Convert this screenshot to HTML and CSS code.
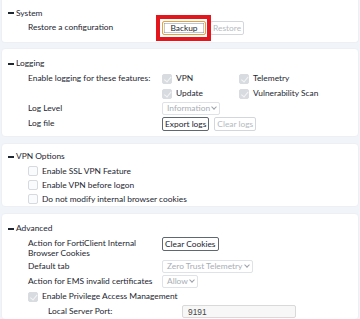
FILE: index.html
```html
<!DOCTYPE html>
<html lang="en">
<head>
    <meta charset="UTF-8">
    <meta name="viewport" content="width=device-width, initial-scale=1.0">
    <title>Settings</title>
    <link rel="stylesheet" href="styles.css">
</head>
<body>
    <div class="panel panel-system">
        <div class="section-title"><span class="collapse"></span>System</div>
        <div class="row">
            <div class="label">Restore a configuration</div>
            <div class="value">
                <span class="highlight"><button class="btn btn-focus">Backup</button></span>
                <button class="btn" disabled>Restore</button>
            </div>
        </div>
    </div>

    <div class="panel panel-logging">
        <div class="section-title"><span class="collapse"></span>Logging</div>
        <div class="row">
            <div class="label">Enable logging for these features:</div>
            <div class="value features">
                <label class="check"><span class="box checked"></span>VPN</label>
                <label class="check"><span class="box checked"></span>Telemetry</label>
            </div>
        </div>
        <div class="row">
            <div class="label"></div>
            <div class="value features">
                <label class="check"><span class="box checked"></span>Update</label>
                <label class="check"><span class="box checked"></span>Vulnerability Scan</label>
            </div>
        </div>
        <div class="row">
            <div class="label">Log Level</div>
            <div class="value"><span class="select select-info">Information<span class="chev"></span></span></div>
        </div>
        <div class="row">
            <div class="label">Log file</div>
            <div class="value">
                <button class="btn">Export logs</button>
                <button class="btn" disabled>Clear logs</button>
            </div>
        </div>
    </div>

    <div class="panel panel-vpn">
        <div class="section-title"><span class="collapse"></span>VPN Options</div>
        <div class="options">
            <label class="check"><span class="box"></span>Enable SSL VPN Feature</label>
            <label class="check"><span class="box"></span>Enable VPN before logon</label>
            <label class="check"><span class="box"></span>Do not modify internal browser cookies</label>
        </div>
    </div>

    <div class="panel panel-advanced">
        <div class="section-title"><span class="collapse"></span>Advanced</div>
        <div class="row row-wrap">
            <div class="label label-wrap">Action for FortiClient Internal Browser Cookies</div>
            <div class="value"><button class="btn">Clear Cookies</button></div>
        </div>
        <div class="row">
            <div class="label">Default tab</div>
            <div class="value"><span class="select select-tab">Zero Trust Telemetry<span class="chev"></span></span></div>
        </div>
        <div class="row">
            <div class="label nowrap">Action for EMS invalid certificates</div>
            <div class="value"><span class="select select-allow">Allow<span class="chev"></span></span></div>
        </div>
        <div class="options">
            <label class="check"><span class="box checked"></span>Enable Privilege Access Management</label>
        </div>
        <div class="port-row">
            <div class="port-label">Local Server Port:</div>
            <input class="port-input" type="text" value="9191" disabled>
        </div>
    </div>
</body>
</html>
```

FILE: styles.css
```css
* {
    box-sizing: border-box;
    margin: 0;
    padding: 0;
}

body {
    font-family: Lato, "Open Sans", sans-serif;
    font-size: 8.4px;
    line-height: 15px;
    color: #1d2631;
    background-color: #f1f4f8;
    padding: 0 1px;
}

.panel {
    background-color: white;
    border: 1px solid #eceff4;
    border-radius: 4px;
    margin-bottom: 6px;
}

.panel-system {
    border-top: none;
    border-radius: 0 0 4px 4px;
    height: 43px;
    padding-top: 6px;
    margin-bottom: 5px;
}

.panel-system .section-title {
    height: 14px;
}

.panel-logging {
    height: 89px;
    padding-top: 7px;
}

.panel-vpn {
    height: 64px;
    padding-top: 5px;
}

.panel-vpn .check {
    height: 14px;
}

.panel-advanced {
    padding-top: 7px;
}

.section-title {
    display: flex;
    align-items: center;
    padding-left: 6px;
    height: 15px;
}

.collapse {
    display: inline-block;
    width: 6px;
    height: 2px;
    background-color: #1d2631;
    margin-right: 2px;
}

.row {
    display: grid;
    grid-template-columns: 134px 1fr;
    padding-left: 26px;
    align-items: center;
    height: 15px;
}

.row-wrap {
    height: 23px;
    align-items: start;
    padding-top: 1px;
}

.label-wrap {
    line-height: 10px;
    padding-top: 1px;
}

.nowrap {
    white-space: nowrap;
}

.value {
    display: flex;
    align-items: center;
    gap: 5px;
}

.features {
    display: grid;
    grid-template-columns: 77px auto;
    gap: 0;
}

.btn {
    font-family: inherit;
    font-size: 8.4px;
    line-height: 12px;
    height: 14px;
    padding: 0 2px;
    background-color: white;
    color: #1d2631;
    border: 1px solid #5f6770;
    border-radius: 2px;
}

.btn:disabled {
    color: #b5bac0;
    border-color: #d3d7dc;
}

.highlight {
    position: relative;
    display: inline-flex;
    margin-right: -1px;
}

.highlight::after {
    content: "";
    position: absolute;
    top: -6px;
    bottom: -6px;
    left: -6px;
    right: -5px;
    border: 4px solid #e3161d;
}

.btn-focus {
    width: 44px;
    border-color: #e9a23b;
    box-shadow: inset 0 0 0 1px #fff, inset 0 0 0 1.5px #8a8f96;
}

.check {
    display: flex;
    align-items: center;
    height: 15px;
}

.box {
    position: relative;
    display: inline-block;
    flex-shrink: 0;
    width: 10px;
    height: 10px;
    border: 1px solid #d6d9dd;
    border-radius: 2px;
    margin-right: 4px;
    background-color: #fafbfc;
}

.box.checked {
    background-color: #d8dbdf;
    border-color: #d8dbdf;
}

.box.checked::after {
    content: "";
    position: absolute;
    left: 2.5px;
    top: 0;
    width: 2.5px;
    height: 5.5px;
    border-right: 1.5px solid #f4f5f6;
    border-bottom: 1.5px solid #f4f5f6;
    transform: rotate(40deg);
}

.select {
    display: inline-flex;
    align-items: center;
    justify-content: space-between;
    height: 13px;
    padding: 0 3px 0 4px;
    color: #a9aeb5;
    border: 1px solid #dfe2e6;
    border-radius: 2px;
}

.select-info {
    width: 58px;
}

.select-tab {
    width: 91px;
}

.select-allow {
    width: 36px;
}

.chev {
    display: inline-block;
    width: 4px;
    height: 4px;
    border-right: 1px solid #9aa0a8;
    border-bottom: 1px solid #9aa0a8;
    transform: rotate(45deg);
    margin-top: -3px;
}

.options {
    padding-left: 26px;
}

.port-row {
    display: flex;
    align-items: center;
    padding-left: 46px;
    height: 15px;
}

.port-label {
    width: 134px;
}

.port-input {
    font-family: "Liberation Sans", Arial, sans-serif;
    font-size: 8.4px;
    width: 114px;
    height: 13px;
    padding: 0 5px;
    color: #444;
    background-color: #f7f7f7;
    border: 1px solid #d9d9d9;
    border-radius: 2px;
}
```
